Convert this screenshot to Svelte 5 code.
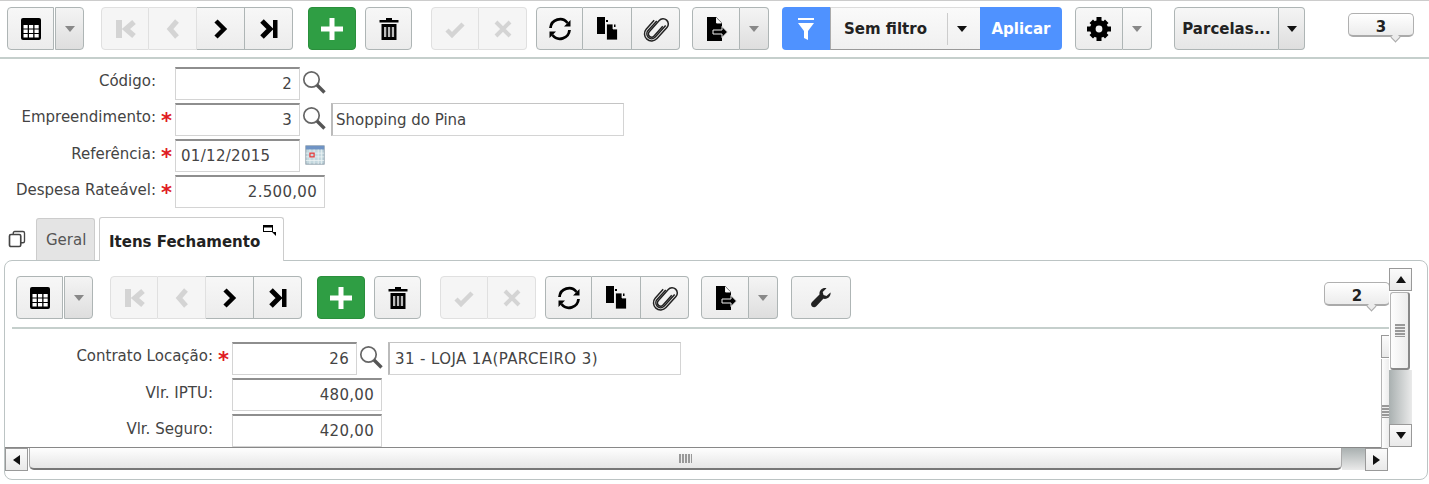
<script>
	// icon bodies, all drawn on a 24x24 box
	const icons = {
		grid: '<rect x="2" y="1" width="20" height="22" rx="2" fill="#000"/><path d="M4.500 8h4.200v3.500H4.500zM10 8h4.200v3.500H10zM15.500 8h4.200v3.500h-4.200zM4.500 12.500h4.200V16H4.500zM10 12.500h4.200V16H10zM15.500 12.500h4.200V16h-4.200zM4.500 17h4.200v3.500H4.500zM10 17h4.200v3.500H10zM15.500 17h4.200v3.500h-4.200z" fill="#fff"/>',
		first: '<path d="M3 3h6v18H3z" fill="#d4d4d4"/><path d="M21 5l-8 7 8 7" fill="none" stroke="#d4d4d4" stroke-width="5.500"/>',
		prev: '<path d="M16 4l-7 8 7 8" fill="none" stroke="#d4d4d4" stroke-width="5"/>',
		next: '<path d="M7 4l8 8-8 8" fill="none" stroke="#000" stroke-width="4.500"/>',
		last: '<path d="M5 4l8 8-8 8" fill="none" stroke="#000" stroke-width="5"/><path d="M16 3h4.500v18H16z" fill="#000"/>',
		plus: '<path d="M9.500 1h5v8.500H23v5h-8.500V23h-5v-8.500H1v-5h8.500z" fill="#fff"/>',
		trash: '<path d="M9 1h6v2h6.500v2.500h-19V3H9z" fill="#000"/><path d="M4.500 7h15v16h-15z" fill="#000"/><path d="M7 10h2.300v10H7zM10.900 10h2.300v10h-2.300zM14.800 10h2.300v10h-2.300z" fill="#bbb"/>',
		check: '<path d="M4 13l5 5L20 7" fill="none" stroke="#d4d4d4" stroke-width="4.500"/>',
		cross: '<path d="M5 5l14 14M19 5L5 19" fill="none" stroke="#d4d4d4" stroke-width="4"/>',
		refresh: '<path d="M2.500 11a9.500 9.500 0 0 1 17-5M21.500 13a9.500 9.500 0 0 1-17 5" fill="none" stroke="#000" stroke-width="2.800"/><path d="M22.500 3v6.500h-6.500zM1.500 21v-6.500h6.500z" fill="#000"/>',
		copy: '<path d="M2 0h8v17H2z" fill="#000"/><path d="M11 3h2v2h-2z" fill="#000"/><path d="M11.500 7h6.500v5h4.500v11H11.500z" fill="#000" stroke="#f2f2f2" stroke-width="0.800"/><path d="M19 7.500h1.500V10H19z" fill="#000"/>',
		clip: '<g transform="rotate(42 12 12) translate(12 12) scale(1.3) translate(-12 -12)" fill="none" stroke="#222" stroke-width="1.150"><path d="M6.500 8v9a5.500 5.500 0 0 0 11 0V5.500a4 4 0 0 0-8 0V17a2.500 2.500 0 0 0 5 0V7"/><path d="M8.300 7v10a3.700 3.700 0 0 0 7.400 0V5"/></g>',
		export: '<path d="M3 0h9l6 6v18H3z" fill="#000"/><path d="M12.500 1v5h5" fill="#fff" stroke="#eee"/><path d="M9 13h9v-3.500l5.500 5.500-5.500 5.500V17H9z" fill="#000" stroke="#eee"/>',
		filter: '<path d="M4 1h16v2H4z" fill="#fff"/><path d="M4 6h16l-6 8v9l-4-2v-7z" fill="#fff"/>',
		gear: '<circle cx="12" cy="12" r="9" fill="#000"/><path d="M9.500 0h5v4h-5zM9.500 20h5v4h-5zM0 9.500h4v5H0zM20 9.500h4v5h-4zM2.500 6l3.500-3.500 3 3L5.500 9zM18 2.500L21.500 6l-3 3-3.500-3.500zM2.500 18l3-3L9 18.500l-3 3zM15 18.500l3.500-3.500 3 3-3.500 3.500z" fill="#000"/><circle cx="12" cy="12" r="3.400" fill="#f4f4f4"/>',
		wrench: '<path d="M21.500 6.500l-4 3.500-3-1-.8-3 3.800-3.800c-3.500-1-7.500 1.500-7 6.300L3 16c-1.500 1.500-1 3.500 0 4.500s3 1.300 4.300-.2l7-7.500c4.500 1 8-3 7.200-6.800z" fill="#222"/>',
		search: '<circle cx="9.500" cy="9.500" r="7.700" fill="#fff" stroke="#666" stroke-width="1.700"/><path d="M15 15l7.500 7.500" stroke="#555" stroke-width="3.400"/>',
		calendar: '<rect x="2" y="2" width="20" height="20" fill="#c4d8df" stroke="#8a9aa6"/><rect x="2" y="2" width="20" height="4" fill="#6f93c4"/><path d="M6.500 6v16M11 6v16M15.500 6v16M19 6v16M2 10h20M2 14h20M2 18h20" stroke="#eef4f6" stroke-width="0.800"/><rect x="6.500" y="10" width="4.500" height="4" fill="none" stroke="#e23b3b" stroke-width="1.400"/>',
		windows: '<rect x="7" y="2" width="15" height="15" rx="2" fill="none" stroke="#444" stroke-width="1.800"/><rect x="2" y="6" width="15" height="16" rx="2" fill="#fff" stroke="#444" stroke-width="2.200"/>'
	};
</script>

{#snippet icon(name, size = 24)}
	<svg viewBox="0 0 24 24" width={size} height={size} overflow="visible">{@html icons[name]}</svg>
{/snippet}

{#snippet btn(name, cls = '')}
	<button class="btn {cls}">{@render icon(name)}</button>
{/snippet}

{#snippet caret(cls = '')}
	<button class="btn caret {cls}"><span class="tri"></span></button>
{/snippet}

{#snippet commonTools()}
	<div class="group">{@render btn('grid', 'slim')}{@render caret('split')}</div>
	<div class="group g17">
		{@render btn('first', 'off')}{@render btn('prev', 'off')}{@render btn('next')}{@render btn('last')}
	</div>
	<button class="btn add g15">{@render icon('plus')}</button>
	<div class="group g9">{@render btn('trash', 'slim')}</div>
	<div class="group g19">{@render btn('check', 'off')}{@render btn('cross', 'off')}</div>
	<div class="group g9">{@render btn('refresh', 'slim')}{@render btn('copy', 'wide')}{@render btn('clip')}</div>
	<div class="group g12">{@render btn('export')}{@render caret('thin')}</div>
{/snippet}

{#snippet field(label, required, value, cls = '', extra = null)}
	<div class="row" class:tight={extra && extra !== cal}>
		<span class="label">{label}</span>
		<span class="req">{required ? '*' : ''}</span>
		<input class="inp {cls}" {value} readonly />
		{#if extra}{@render extra()}{/if}
	</div>
{/snippet}

{#snippet lookupShop()}
	<span class="look">{@render icon('search')}</span>
	<input class="inp text" value="Shopping do Pina" readonly />
{/snippet}

{#snippet lookupOnly()}
	<span class="look">{@render icon('search')}</span>
{/snippet}

{#snippet lookupLoja()}
	<span class="look">{@render icon('search')}</span>
	<input class="inp text caps" value="31 - LOJA 1A(PARCEIRO 3)" readonly />
{/snippet}

{#snippet cal()}
	<span class="look cal">{@render icon('calendar', 22)}</span>
{/snippet}

<main>
	<div class="toolbar top">
		{@render commonTools()}
		<div class="group g13 filter">
			<button class="btn fbtn">{@render icon('filter')}</button>
			<div class="fsel">
				<span class="fname">Sem filtro</span>
				<span class="tri dark"></span>
			</div>
			<button class="apply">Aplicar</button>
		</div>
		<div class="group g13">{@render btn('gear')}{@render caret('thin light')}</div>
		<div class="group g22">
			<button class="btn parc">Parcelas...</button>
			<button class="btn caret parc-c"><span class="tri dark"></span></button>
		</div>
		<div class="bubble b3">3</div>
	</div>

	<div class="form">
		{@render field('Código:', false, '2', 'num', lookupOnly)}
		{@render field('Empreendimento:', true, '3', 'num', lookupShop)}
		{@render field('Referência:', true, '01/12/2015', 'date', cal)}
		{@render field('Despesa Rateável:', true, '2.500,00', 'num long')}
	</div>

	<div class="tabs">
		<span class="winicon">{@render icon('windows', 18)}</span>
		<div class="tab">Geral</div>
		<div class="tab active">
			Itens Fechamento
			<svg class="expand" viewBox="0 0 14 12" width="14" height="12">
				<rect x="0.500" y="0.500" width="9" height="6" fill="#fff" stroke="#000"/>
				<rect x="0.500" y="0.500" width="9" height="2" fill="#000"/>
				<path d="M9 7h4v4z" fill="#000"/>
			</svg>
		</div>
	</div>

	<section class="panel">
		<div class="viewport">
			<div class="toolbar inner">
				{@render commonTools()}
				<div class="group g13">{@render btn('wrench', 'wrenchbtn')}</div>
			</div>
			<div class="bubble b2">2</div>
			<div class="form nested">
				{@render field('Contrato Locação:', true, '26', 'num', lookupLoja)}
				{@render field('Vlr. IPTU:', false, '480,00', 'num long')}
				{@render field('Vlr. Seguro:', false, '420,00', 'num long')}
			</div>
		</div>

		<div class="hscroll">
			<button class="sb"><span class="arr left"></span></button>
			<div class="hthumb"><span class="grip h"></span></div>
			<div class="htrack"></div>
			<button class="sb"><span class="arr right"></span></button>
		</div>

		<!-- second scrollbar sits behind the main one, only a strip of it shows -->
		<div class="vscroll back">
			<button class="sb"></button>
			<div class="vthumb"><span class="grip v"></span></div>
		</div>
		<div class="vscroll">
			<button class="sb"><span class="arr up"></span></button>
			<div class="vthumb"><span class="grip v"></span></div>
			<div class="vtrack"></div>
			<button class="sb"><span class="arr down"></span></button>
		</div>
	</section>
</main>

<style>
	:global(body) {
		margin: 0;
		background: #fff;
	}

	main {
		font-family: "DejaVu Sans", Verdana, sans-serif;
		font-size: 15px;
		color: #444;
		width: 1429px;
		height: 484px;
		overflow: hidden;
		border-top: 1px solid #ccc;
		box-sizing: border-box;
	}

	.toolbar {
		display: flex;
		align-items: flex-start;
		height: 43px;
	}

	.toolbar.top {
		padding: 6px 0 0 7px;
		height: 50px;
		margin-bottom: 8px;
		border-bottom: 2px solid #c5cfcc;
	}

	.toolbar.inner {
		margin: 0 0 13px 7px;
		padding-bottom: 8px;
		padding-left: 4px;
		border-bottom: 2px solid #c5cfcc;
		width: 1373px;
	}

	.group {
		display: flex;
	}

	.g9 { margin-left: 9px; }
	.g12 { margin-left: 12px; }
	.g13 { margin-left: 13px; }
	.g15 { margin-left: 15px; }
	.g17 { margin-left: 17px; }
	.g19 { margin-left: 19px; }
	.g22 { margin-left: 22px; }

	.btn {
		width: 48px;
		height: 43px;
		padding: 0;
		box-sizing: border-box;
		display: flex;
		align-items: center;
		justify-content: center;
		background: linear-gradient(#f7f7f7, #ececec);
		border: 1px solid #aeb5b5;
		border-radius: 4px;
		flex: none;
	}

	.group > .btn:not(:first-child) {
		border-top-left-radius: 0;
		border-bottom-left-radius: 0;
		border-left-width: 0;
	}

	.group > .btn:not(:last-child) {
		border-top-right-radius: 0;
		border-bottom-right-radius: 0;
	}

	.btn.off {
		background: #f5f5f5;
		border-color: #e0e0e0;
	}

	.btn.slim {
		width: 47px;
	}

	.btn.wide {
		width: 49px;
	}

	.caret {
		width: 29px;
		background: linear-gradient(#f4f4f4, #dedede);
	}

	.caret.light {
		background: linear-gradient(#fafafa, #eeeeee);
	}

	.caret.split {
		margin-left: 1px;
		border-left-width: 1px !important;
	}

	.tri {
		display: block;
		width: 0;
		height: 0;
		border: 5px solid transparent;
		border-top: 6px solid #888;
		border-bottom: 0;
	}

	.tri.dark {
		border-top-color: #111;
	}

	.add {
		background: #2f9e44;
		border-color: #2a8f3c;
	}

	.filter {
		height: 43px;
	}

	.fbtn {
		background: #4f92ff;
		border: 0;
	}

	.fsel {
		width: 150px;
		box-sizing: border-box;
		display: flex;
		align-items: center;
		background: linear-gradient(#fafafa, #f0f0f0);
		border-top: 1px solid #ddd;
		border-bottom: 1px solid #999;
		border-left: 1px solid #aaa;
		padding-left: 13px;
	}

	.fname {
		font-weight: bold;
		color: #222;
		font-size: 15px;
		width: 103px;
		border-right: 1px solid #ccc;
		line-height: 32px;
	}

	.fsel .tri {
		margin-left: 9px;
	}

	.apply {
		width: 82px;
		border: 0;
		padding: 0;
		background: #4f92ff;
		color: #fff;
		font: bold 15px "DejaVu Sans", Verdana, sans-serif;
		border-radius: 0 4px 4px 0;
	}

	.parc {
		width: 105px;
		font: bold 15px "DejaVu Sans", Verdana, sans-serif;
		color: #222;
		background: linear-gradient(#f7f7f7, #e6e6e6);
	}

	.parc-c {
		width: 26px;
	}

	.wrenchbtn {
		width: 60px;
	}

	.bubble {
		position: absolute;
		width: 66px;
		height: 24px;
		box-sizing: border-box;
		border: 1px solid #b0b0b0;
		border-bottom: 2px solid #aaa;
		border-radius: 5px;
		background: linear-gradient(#fff, #ececec);
		color: #222;
		font-weight: bold;
		font-size: 15px;
		line-height: 27px;
		text-align: center;
	}

	.bubble::after {
		content: "";
		position: absolute;
		right: 14px;
		bottom: -6px;
		width: 7px;
		height: 7px;
		background: #ececec;
		border-right: 1px solid #aaa;
		border-bottom: 1px solid #aaa;
		transform: rotate(45deg);
		box-sizing: border-box;
	}

	.b3 {
		left: 1348px;
		top: 13px;
	}

	.b2 {
		left: 1319px;
		top: 21px;
	}

	.form {
		display: flex;
		flex-direction: column;
		gap: 3px;
	}

	.row {
		display: flex;
		align-items: flex-start;
		height: 33px;
	}

	.label {
		width: 156px;
		text-align: right;
		line-height: 30px;
		white-space: nowrap;
	}

	.tight .label {
		line-height: 28px;
	}

	.nested .label {
		width: 208px;
	}

	.req {
		width: 19px;
		flex: none;
		text-align: left;
		padding-left: 5px;
		box-sizing: border-box;
		color: #e01b24;
		font-size: 21px;
		font-weight: bold;
		line-height: 36px;
	}

	.inp {
		height: 33px;
		box-sizing: border-box;
		border: 1px solid #d4d4d4;
		border-top: 2px solid #8e8e8e;
		background: #fff;
		padding: 0 7px;
		font: 15px "DejaVu Sans", Verdana, sans-serif;
		color: #444;
		width: 125px;
		flex: none;
		outline: none;
	}

	.num, .date {
		letter-spacing: 0.3px;
	}

	.num {
		text-align: right;
	}

	.long {
		width: 150px;
	}

	.date {
		padding-left: 5px;
	}

	.text {
		width: 293px;
		padding-left: 3px;
		margin-left: 4px;
		border-top: 1px solid #c4c4c4;
		border-left: 2px solid #bbb;
	}

	.text.caps {
		padding-left: 5px;
		letter-spacing: 0.4px;
	}

	.look {
		display: flex;
		margin: 3px 0 0 2px;
		width: 25px;
		height: 24px;
	}

	.cal {
		margin: 5px 0 0 4px;
	}

	.tabs {
		display: flex;
		align-items: flex-end;
		height: 43px;
		margin-top: 9px;
		position: relative;
		z-index: 1;
	}

	.winicon {
		display: flex;
		margin: 0 10px 12px 8px;
	}

	.tab {
		height: 42px;
		box-sizing: border-box;
		padding: 0 9px;
		background: #e4e4e4;
		border: 1px solid #ccc;
		border-bottom: 0;
		border-radius: 3px 3px 0 0;
		line-height: 43px;
		width: 59px;
		color: #555;
	}

	.tab.active {
		position: relative;
		width: 185px;
		height: 44px;
		margin: 0 0 -1px 4px;
		background: #fff;
		color: #222;
		font-weight: bold;
		line-height: 48px;
		white-space: nowrap;
	}

	.expand {
		position: absolute;
		top: 7px;
		right: 6px;
	}

	.panel {
		position: relative;
		width: 1424px;
		height: 220px;
		margin-left: 4px;
		box-sizing: border-box;
		border: 1px solid #bcc4c4;
		border-radius: 8px;
	}

	.viewport {
		position: relative;
		height: 186px;
		padding-top: 15px;
		box-sizing: border-box;
		overflow: hidden;
	}

	.sb {
		width: 23px;
		height: 23px;
		flex: none;
		padding: 0;
		display: flex;
		align-items: center;
		justify-content: center;
		box-sizing: border-box;
		background: linear-gradient(#fbfbfb, #e9e9e9);
		border: 1px solid #999;
	}

	.arr {
		display: block;
		width: 0;
		height: 0;
		border: 5px solid transparent;
	}

	.arr.up { border-top: 0; border-bottom: 7px solid #111; }
	.arr.down { border-bottom: 0; border-top: 7px solid #111; }
	.arr.left { border-left: 0; border-right: 7px solid #111; }
	.arr.right { border-right: 0; border-left: 7px solid #111; }

	.hscroll {
		display: flex;
		height: 23px;
		width: 1383px;
		border-top: 1px solid #888;
		box-sizing: border-box;
	}

	.hthumb {
		flex: 1;
		margin-left: 1px;
		display: flex;
		align-items: center;
		justify-content: center;
		background: linear-gradient(#fefefe, #e6e6e6);
		border: 1px solid #aaa;
		border-top: 0;
		border-bottom: 2px solid #777;
		border-radius: 0 0 5px 5px;
	}

	.htrack {
		width: 23px;
		background: linear-gradient(#a9b0b0, #eaeaea);
	}

	.grip.h {
		width: 13px;
		height: 9px;
		background: repeating-linear-gradient(90deg, #999 0 2px, #eee 2px 3px);
	}

	.grip.v {
		width: 10px;
		height: 13px;
		background: repeating-linear-gradient(#999 0 2px, #eee 2px 3px);
	}

	.vscroll {
		position: absolute;
		top: 7px;
		left: 1384px;
		width: 23px;
		height: 179px;
		display: flex;
		flex-direction: column;
		background: #fff;
	}

	.vscroll.back {
		top: 74px;
		left: 1376px;
		width: 8px;
		height: 113px;
		overflow: hidden;
	}

	.vthumb {
		height: 78px;
		margin: 1px 2px 0 1px;
		flex: none;
		display: flex;
		align-items: center;
		justify-content: center;
		background: linear-gradient(90deg, #fdfdfd, #ececec);
		border: 1px solid #b5b5b5;
		border-right: 2px solid #888;
		border-bottom: 2px solid #888;
		border-radius: 3px;
		box-sizing: border-box;
	}

	.back .vthumb {
		flex: 1;
		margin: 1px 0 0;
		padding-top: 16px;
		border-radius: 0;
		border-width: 0 0 0 1px;
		justify-content: flex-start;
	}

	.back .sb {
		width: 23px;
	}

	.vtrack {
		flex: 1;
		background: linear-gradient(90deg, #a9b0b0, #eaeaea);
	}
</style>
